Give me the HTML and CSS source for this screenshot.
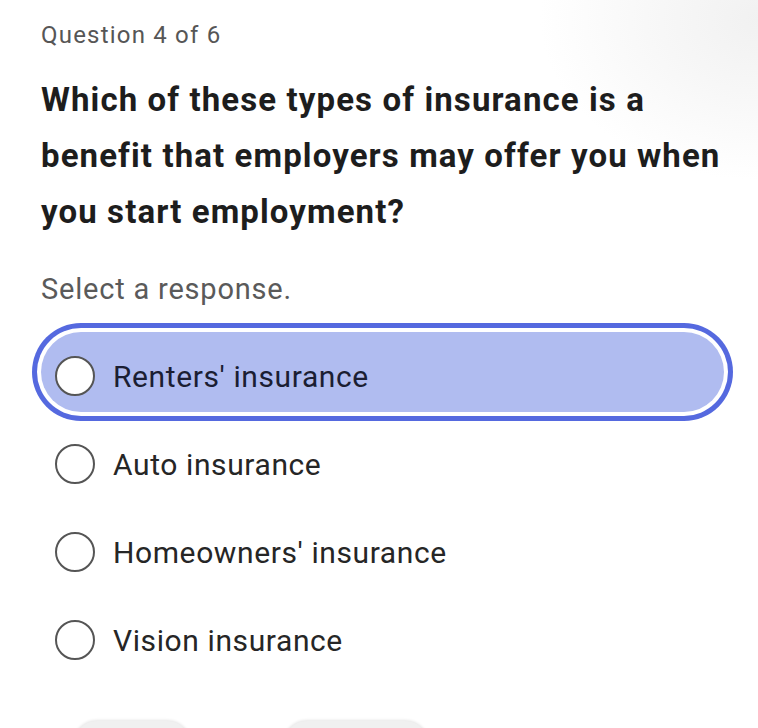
FILE: index.html
```html
<!DOCTYPE html>
<html lang="en">
<head>
<meta charset="utf-8">
<title>Question 4 of 6</title>
<link rel="stylesheet" href="styles.css">
</head>
<body>
<main class="quiz">
  <p class="counter">Question 4 of 6</p>
  <h1 class="question">Which of these types of insurance is a benefit that employers may offer you when you start employment?</h1>
  <p class="prompt">Select a response.</p>
  <ul class="options">
    <li class="option selected"><span class="radio"></span><span class="label">Renters' insurance</span></li>
    <li class="option"><span class="radio"></span><span class="label">Auto insurance</span></li>
    <li class="option"><span class="radio"></span><span class="label">Homeowners' insurance</span></li>
    <li class="option"><span class="radio"></span><span class="label">Vision insurance</span></li>
  </ul>
  <div class="actions">
    <span class="btn btn-a"></span>
    <span class="btn btn-b"></span>
  </div>
</main>
</body>
</html>
```
FILE: styles.css
```css
html, body {
  margin: 0;
  padding: 0;
}
body {
  width: 758px;
  height: 728px;
  overflow: hidden;
  font-family: Roboto, "Noto Sans", sans-serif;
  background:
    radial-gradient(ellipse 220px 160px at 760px 20px, #f1f1f1 0%, #f7f7f7 45%, rgba(255,255,255,0) 100%),
    #ffffff;
}
.quiz {
  padding: 20px 34px 0 41px;
}
.counter {
  margin: 0;
  font-size: 24px;
  line-height: 30px;
  color: #565656;
  letter-spacing: 1.2px;
}
.question {
  margin: 22px 0 0;
  font-size: 33px;
  line-height: 56px;
  font-weight: 700;
  color: #1d1d1d;
  letter-spacing: 1.1px;
}
.prompt {
  margin: 29px 0 0;
  font-size: 29px;
  line-height: 40px;
  color: #5a5a5a;
  letter-spacing: 0.8px;
}
.options {
  list-style: none;
  margin: 23px 0 0;
  padding: 0;
  display: flex;
  flex-direction: column;
  gap: 8px;
}
.option {
  height: 72px;
  padding: 8px 0 0 14px;
  border-radius: 40px;
  display: flex;
  align-items: center;
  gap: 18px;
}
.option.selected {
  background: #b0bcf0;
  box-shadow: 0 0 0 4px #ffffff, 0 0 0 9px #5569df;
}
.radio {
  width: 36px;
  height: 36px;
  border: 2px solid #555555;
  border-radius: 50%;
  background: #ffffff;
  flex: none;
}
.label {
  font-size: 30px;
  color: #262626;
  letter-spacing: 0.6px;
}
.selected .label {
  color: #1b1e33;
}
.actions {
  margin-top: 45px;
  display: flex;
  gap: 92px;
  padding-left: 32px;
}
.btn {
  height: 48px;
  border-radius: 24px;
  background: #f0f0f0;
  box-shadow: 0 -1px 3px rgba(0,0,0,0.1);
}
.btn-a { width: 118px; }
.btn-b { width: 146px; }
```
